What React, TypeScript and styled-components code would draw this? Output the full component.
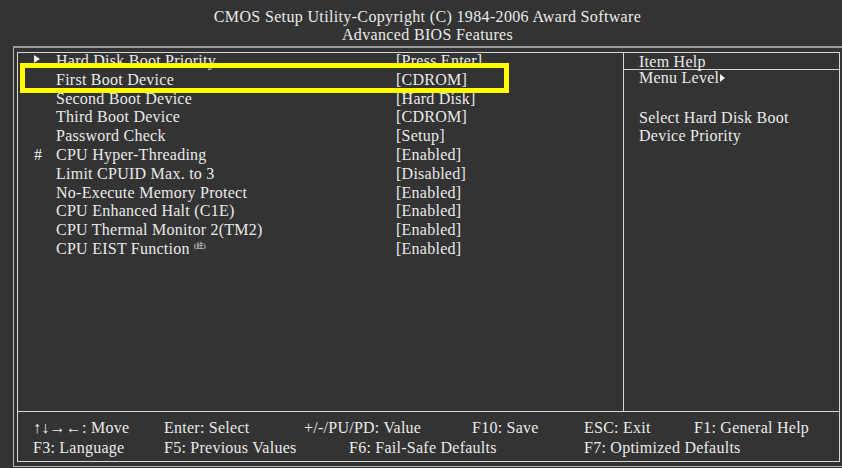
import React from "react";
import styled, { createGlobalStyle } from "styled-components";

const GlobalStyle = createGlobalStyle`
  html, body {
    margin: 0;
    padding: 0;
    background: #333333;
    overflow: hidden;
  }
  body {
    font-family: "Liberation Serif", "Times New Roman", "Noto Sans CJK SC", serif;
  }
`;

const Page = styled.div`
  position: relative;
  width: 842px;
  height: 468px;
  overflow: hidden;
  background: #333333;
  color: #eaeaea;
  font-size: 16px;
  letter-spacing: 0.25px;
`;

const Header = styled.div`
  height: 46px;
  box-sizing: border-box;
  padding: 8px 0 0 13px;
  line-height: 18px;
  text-align: center;
  letter-spacing: 0.35px;
`;

const OuterFrame = styled.div`
  margin-left: 13px;
  border-left: 1px solid #b4b4b4;
  border-top: 2px solid #9a9a9a;
  border-bottom: 1px solid #b4b4b4;
  padding: 4px 0 4px 3px;
`;

const InnerBox = styled.div`
  width: 823px;
  height: 410px;
  box-sizing: border-box;
  border: 1px solid #d6d6d6;
  display: flex;
  flex-direction: column;
`;

const Main = styled.div`
  flex: none;
  height: 358px;
  display: grid;
  grid-template-columns: 605px 1fr;
`;

const ItemList = styled.div`
  padding-left: 16px;
  margin-top: -1px;
`;

const ItemRow = styled.div`
  display: grid;
  grid-template-columns: 22px 340px 1fr;
  line-height: 18.8px;
  height: 18.8px;
  white-space: nowrap;
`;

const Marker = styled.span`
  display: flex;
  align-items: center;
  padding-bottom: 4px;
`;

const Triangle = styled.span<{ $w?: number; $h?: number }>`
  display: inline-block;
  width: 0;
  height: 0;
  border-top: ${(p) => (p.$h ?? 9) / 2}px solid transparent;
  border-bottom: ${(p) => (p.$h ?? 9) / 2}px solid transparent;
  border-left: ${(p) => p.$w ?? 6}px solid #f2f2f2;
`;

const Sup = styled.span`
  font-size: 7px;
  line-height: 0;
  vertical-align: 6px;
  letter-spacing: 0;
`;

const HelpColumn = styled.div`
  border-left: 1px solid #d6d6d6;
`;

const HelpTitle = styled.div`
  height: 16px;
  line-height: 18px;
  padding-left: 15px;
  border-bottom: 1px solid #d6d6d6;
`;

const HelpLine = styled.div`
  padding-left: 15px;
  line-height: 16px;
  display: flex;
  align-items: center;
  gap: 1px;
`;

const HelpText = styled.div`
  padding-left: 15px;
  margin-top: 22.7px;
  line-height: 18.4px;
`;

const Footer = styled.div`
  flex: none;
  height: 49px;
  border-top: 1px solid #d6d6d6;
  box-sizing: content-box;
  padding: 6px 0 0 15px;
`;

const FooterRow = styled.div<{ $cols: string }>`
  display: grid;
  grid-template-columns: ${(p) => p.$cols};
  line-height: 20px;
  white-space: nowrap;
`;

const Highlight = styled.div`
  position: absolute;
  left: 20px;
  top: 63px;
  width: 489px;
  height: 30px;
  box-sizing: border-box;
  border: 5px solid #ffff00;
`;

type Item = { mark?: "arrow" | "hash"; label: React.ReactNode; value: string };

const items: Item[] = [
  { mark: "arrow", label: "Hard Disk Boot Priority", value: "[Press Enter]" },
  { label: "First Boot Device", value: "[CDROM]" },
  { label: "Second Boot Device", value: "[Hard Disk]" },
  { label: "Third Boot Device", value: "[CDROM]" },
  { label: "Password Check", value: "[Setup]" },
  { mark: "hash", label: "CPU Hyper-Threading", value: "[Enabled]" },
  { label: "Limit CPUID Max. to 3", value: "[Disabled]" },
  { label: "No-Execute Memory Protect", value: "[Enabled]" },
  { label: "CPU Enhanced Halt (C1E)", value: "[Enabled]" },
  { label: "CPU Thermal Monitor 2(TM2)", value: "[Enabled]" },
  {
    label: (
      <>
        CPU EIST Function <Sup>(註)</Sup>
      </>
    ),
    value: "[Enabled]",
  },
];

const App: React.FC = () => {
  return (
    <Page>
      <GlobalStyle />
      <Header>
        CMOS Setup Utility-Copyright (C) 1984-2006 Award Software
        <br />
        Advanced BIOS Features
      </Header>
      <OuterFrame>
        <InnerBox>
          <Main>
            <ItemList>
              {items.map((it, i) => (
                <ItemRow key={i}>
                  <Marker>
                    {it.mark === "arrow" && <Triangle $w={6} $h={9} />}
                    {it.mark === "hash" && "#"}
                  </Marker>
                  <span>{it.label}</span>
                  <span>{it.value}</span>
                </ItemRow>
              ))}
            </ItemList>
            <HelpColumn>
              <HelpTitle>Item Help</HelpTitle>
              <HelpLine>
                Menu Level
                <Triangle $w={5} $h={9} />
              </HelpLine>
              <HelpText>
                Select Hard Disk Boot
                <br />
                Device Priority
              </HelpText>
            </HelpColumn>
          </Main>
          <Footer>
            <FooterRow $cols="131px 140px 168px 112px 110px 1fr">
              <span>↑↓→←: Move</span>
              <span>Enter: Select</span>
              <span>+/-/PU/PD: Value</span>
              <span>F10: Save</span>
              <span>ESC: Exit</span>
              <span>F1: General Help</span>
            </FooterRow>
            <FooterRow $cols="131px 185px 235px 1fr">
              <span>F3: Language</span>
              <span>F5: Previous Values</span>
              <span>F6: Fail-Safe Defaults</span>
              <span>F7: Optimized Defaults</span>
            </FooterRow>
          </Footer>
        </InnerBox>
      </OuterFrame>
      <Highlight />
    </Page>
  );
};

export default App;
